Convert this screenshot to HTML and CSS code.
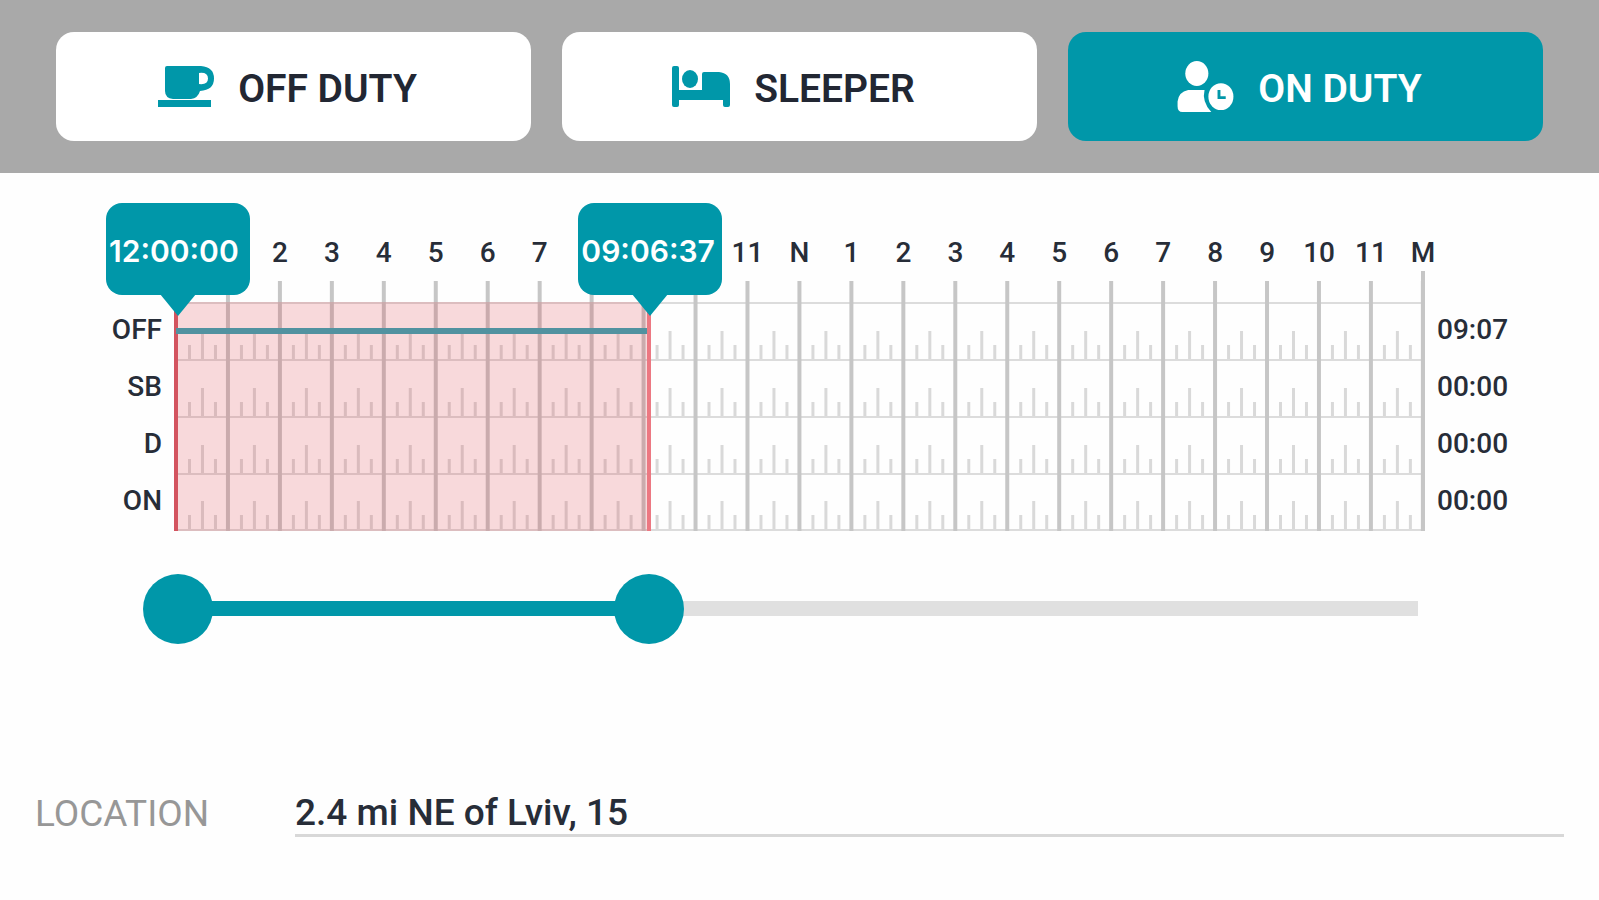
FILE: index.html
```html
<!DOCTYPE html>
<html lang="en">
<head>
    <meta charset="UTF-8">
    <meta name="viewport" content="width=device-width, initial-scale=1.0">
    <title>Edit duty status</title>
    <link rel="stylesheet" href="styles.css">
</head>
<body>
    <header class="status-bar">
        <button type="button" class="status-btn">
            <svg width="56" height="42" viewBox="0 0 56 42" fill="currentColor" aria-hidden="true">
                <path fill-rule="evenodd" d="M9 0H43Q56 1 56 12.500Q56 24 42 25Q40 32 33 33H15Q7 32 7 25V2Q7 0 9 0ZM41 7V18Q50 19 50 12.500Q50 6 41 7Z"/>
                <rect y="34" width="53" height="7"/>
            </svg>
            <span>OFF DUTY</span>
        </button>
        <button type="button" class="status-btn">
            <svg width="58" height="42" viewBox="0 0 58 42" fill="currentColor" aria-hidden="true">
                <path d="M0 2Q0 0 2 0H5Q7 0 7 2V24H30V8Q30 6 32 6H47Q58 7 58 18V39Q58 41 56 41H53Q51 41 51 39V34H7V39Q7 41 5 41H2Q0 41 0 39Z"/>
                <ellipse cx="18" cy="13" rx="8" ry="9"/>
            </svg>
            <span>SLEEPER</span>
        </button>
        <button type="button" class="status-btn active">
            <svg width="57" height="52" viewBox="0 0 58 54" fill="currentColor" aria-hidden="true">
                <ellipse cx="20" cy="13" rx="12" ry="13"/>
                <path d="M11 30H28Q25 42 35 53H5Q0 53 0 47V42Q1 32 11 30Z"/>
                <ellipse cx="45" cy="37" rx="13" ry="14"/>
                <path class="hand" d="M43 30V38H50"/>
            </svg>
            <span>ON DUTY</span>
        </button>
    </header>

    <main>
        <section class="chart">
            <div class="hours">
                <span></span><span>2</span><span>3</span><span>4</span><span>5</span><span>6</span>
                <span>7</span><span></span><span></span><span></span><span>11</span><span>N</span>
                <span>1</span><span>2</span><span>3</span><span>4</span><span>5</span><span>6</span>
                <span>7</span><span>8</span><span>9</span><span>10</span><span>11</span><span>M</span>
            </div>
            <div class="names">
                <span>OFF</span>
                <span>SB</span>
                <span>D</span>
                <span>ON</span>
            </div>
            <div class="grid">
                <div class="row"></div>
                <div class="row"></div>
                <div class="row"></div>
                <div class="row"></div>
                <!-- 09:06:37 of 24 hours -->
                <div class="selection" style="width: 37.96%">
                    <div class="duty-line"></div>
                    <div class="flag flag-start">12:00:00</div>
                    <div class="flag flag-end">09:06:37</div>
                </div>
            </div>
            <div class="totals">
                <span>09:07</span>
                <span>00:00</span>
                <span>00:00</span>
                <span>00:00</span>
            </div>
        </section>

        <div class="slider">
            <div class="track"><div class="track-fill" style="width: 37.96%"></div></div>
            <input type="range" min="0" max="86400" value="0" aria-label="Start time">
            <input type="range" min="0" max="86400" value="32797" aria-label="End time">
        </div>

        <div class="field">
            <label for="location">LOCATION</label>
            <input type="text" id="location" value="2.4 mi NE of Lviv, 15">
        </div>
    </main>
</body>
</html>
```
FILE: styles.css
```css
* {
    box-sizing: border-box;
}

body {
    margin: 0;
    background: #fefefe;
    color: #272d38;
    font-family: Roboto, "Liberation Sans", sans-serif;
}

.status-bar {
    display: flex;
    gap: 31px;
    padding: 32px 56px;
    background: #a9a9a9;
}

.status-btn {
    flex: 1;
    display: flex;
    align-items: center;
    justify-content: center;
    gap: 24px;
    height: 109px;
    padding: 0 12px 0 0;
    border: 0;
    border-radius: 18px;
    background: #fff;
    color: #222733;
    font-family: inherit;
    font-size: 39px;
    font-weight: 600;
    cursor: pointer;
}

.status-btn span {
    padding-top: 4px;
}

.status-btn svg {
    color: #0097a9;
}

.status-btn.active,
.status-btn.active svg {
    color: #fff;
}

.status-btn.active {
    background: #0097a9;
}

.hand {
    fill: none;
    stroke: #0097a9;
    stroke-width: 3;
}

/* log chart */
.chart {
    display: grid;
    grid-template-columns: 162px 1fr 162px;
    column-gap: 14px;
    padding-top: 64px;
    font-size: 28px;
    font-weight: 500;
}

.hours {
    grid-column: 2;
    display: grid;
    grid-template-columns: repeat(24, 1fr);
    height: 65px;
    margin: 0 calc(-100% / 48) 0 calc(100% / 48);
    line-height: 32px;
    text-align: center;
}

.names {
    grid-column: 1;
    text-align: right;
}

.names span,
.totals span {
    display: block;
    height: 57px;
    line-height: 56px;
}

.grid {
    position: relative;
}

.row {
    height: 57px;
    border-top: 2px solid #dcdcdc;
    background:
        linear-gradient(90deg, transparent calc(50% - 1px), #d9d9d9 calc(50% - 1px) calc(50% + 2px), transparent calc(50% + 2px)) 0 100% / calc(100% / 24) 28px repeat-x,
        linear-gradient(90deg, transparent calc(25% - 1px), #d9d9d9 calc(25% - 1px) calc(25% + 2px), transparent calc(25% + 2px) calc(75% - 1px), #d9d9d9 calc(75% - 1px) calc(75% + 2px), transparent calc(75% + 2px)) 0 100% / calc(100% / 24) 14px repeat-x;
}

.row:nth-child(4) {
    height: 58px;
    border-bottom: 2px solid #dcdcdc;
}

/* hour lines stick out above the rows */
.grid::before {
    content: "";
    position: absolute;
    inset: -21px 0 0 -2px;
    background: linear-gradient(90deg, #c6c6c6 4px, transparent 4px) 0 0 / calc((100% - 2px) / 24) 100% repeat-x;
}

.grid::after {
    content: "";
    position: absolute;
    top: -31px;
    right: -2px;
    bottom: 0;
    width: 4px;
    background: #c6c6c6;
}

.selection {
    position: absolute;
    top: 0;
    bottom: 0;
    left: 0;
    background: rgba(220, 50, 60, 0.18);
}

.selection::before,
.selection::after {
    content: "";
    position: absolute;
    top: 0;
    bottom: 0;
    width: 4px;
}

.selection::before {
    left: -2px;
    background: #d3545f;
}

.selection::after {
    right: -2px;
    background: #ec7882;
}

.duty-line {
    position: absolute;
    top: 26px;
    left: 0;
    right: 0;
    height: 6px;
    background: #5192a0;
}

.flag {
    position: absolute;
    z-index: 1;
    top: -99px;
    width: 144px;
    height: 92px;
    padding-left: 3px;
    border-radius: 16px;
    background: #0097a9;
    color: #fff;
    font-family: Inter, Roboto, sans-serif;
    line-height: 96px;
    font-size: 30px;
    font-weight: 600;
    white-space: nowrap;
}

.flag::after {
    content: "";
    position: absolute;
    top: 91px;
    left: 54px;
    border: solid transparent;
    border-width: 22px 18px 0;
    border-top-color: #0097a9;
}

.flag-start {
    left: -70px;
}

.flag-end {
    right: -73px;
}

/* range slider */
.slider {
    position: relative;
    height: 70px;
    margin: 43px 146px 0 143px;
}

.track {
    position: absolute;
    top: 27px;
    left: 35px;
    right: 35px;
    height: 15px;
    background: #e0e0e0;
}

.track-fill {
    height: 100%;
    background: #0097a9;
}

.slider input {
    position: absolute;
    inset: 0;
    width: 100%;
    height: 70px;
    margin: 0;
    background: none;
    appearance: none;
    pointer-events: none;
}

.slider input::-webkit-slider-thumb {
    width: 70px;
    height: 70px;
    border-radius: 50%;
    background: #0097a9;
    appearance: none;
    pointer-events: auto;
}

.slider input::-moz-range-thumb {
    width: 70px;
    height: 70px;
    border: 0;
    border-radius: 50%;
    background: #0097a9;
    pointer-events: auto;
}

.field {
    display: grid;
    grid-template-columns: 260px 1fr;
    align-items: center;
    margin: 143px 35px 0 35px;
    font-size: 37px;
}

.field label {
    padding-top: 2px;
    color: #979797;
}

.field input {
    width: 100%;
    height: 50px;
    padding: 4px 0 0;
    border: 0;
    border-bottom: 3px solid #d8d8d8;
    background: none;
    color: #272d38;
    font: inherit;
    font-weight: 500;
    outline: 0;
}
```
